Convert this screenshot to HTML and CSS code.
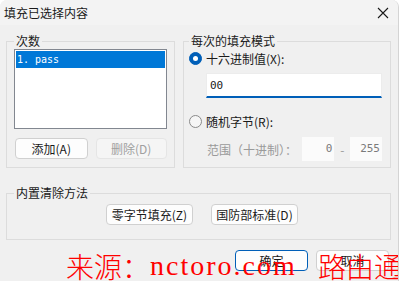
FILE: index.html
```html
<!DOCTYPE html>
<html lang="zh-CN">
<head>
    <meta charset="UTF-8">
    <title>填充已选择内容</title>
    <link rel="stylesheet" href="styles.css">
</head>
<body>
    <div class="dialog">
        <div class="titlebar">
            <span class="title">填充已选择内容</span>
            <svg class="close" width="12" height="12" viewBox="0 0 12 12">
                <path d="M1 1 L11 11 M11 1 L1 11" stroke="#1a1a1a" stroke-width="1.1" fill="none"/>
            </svg>
        </div>

        <div class="content">
            <div class="top-row">
                <fieldset class="group group-passes">
                    <legend>次数</legend>
                    <div class="listbox">
                        <div class="list-item selected">1. pass</div>
                    </div>
                    <div class="btn-row">
                        <button class="btn">添加(A)</button>
                        <button class="btn" disabled>删除(D)</button>
                    </div>
                </fieldset>

                <fieldset class="group group-mode">
                    <legend>每次的填充模式</legend>
                    <div class="radio-row">
                        <span class="radio checked"></span>
                        <span>十六进制值(X):</span>
                    </div>
                    <div class="hex-input">00</div>
                    <div class="radio-row second">
                        <span class="radio"></span>
                        <span>随机字节(R):</span>
                    </div>
                    <div class="range-row">
                        <span class="range-label">范围（十进制）：</span>
                        <span class="num-box">0</span>
                        <span class="dash">-</span>
                        <span class="num-box">255</span>
                    </div>
                </fieldset>
            </div>

            <fieldset class="group group-method">
                <legend>内置清除方法</legend>
                <div class="method-row">
                    <button class="btn btn-wide">零字节填充(Z)</button>
                    <button class="btn btn-wide">国防部标准(D)</button>
                </div>
            </fieldset>

            <div class="footer">
                <button class="btn default">确定</button>
                <button class="btn">取消</button>
            </div>
        </div>

        <div class="watermark">
            <span class="wm-cjk">来源：</span><span class="wm-latin">nctoro.com</span><span class="wm-cjk">路由通</span>
        </div>
    </div>
</body>
</html>
```

FILE: styles.css
```css
* {
    box-sizing: border-box;
}
body {
    margin: 0;
    background-color: #ffffff;
    font-family: "Noto Sans CJK SC", "Liberation Sans", sans-serif;
    font-size: 12px;
    color: #1a1a1a;
}
.dialog {
    position: relative;
    width: 399px;
    height: 281px;
    background-color: #f0f0f0;
    border-right: 1px solid #d4d4d4;
    border-top-left-radius: 7px;
    border-top-right-radius: 7px;
    overflow: hidden;
}
.titlebar {
    height: 25px;
    display: flex;
    align-items: center;
    justify-content: space-between;
    padding: 0 9px 0 4px;
    background-color: #f3f3f3;
}
.title {
    line-height: 16px;
}
.close {
    display: block;
}
.content {
    padding: 8px 7px 0 6px;
}
.top-row {
    display: flex;
    gap: 8px;
}
.group {
    margin: 0;
    border: 1px solid #dcdcdc;
    min-inline-size: 0;
}
.group legend {
    padding: 0 2px;
    line-height: 16px;
}
.group-passes {
    width: 169px;
    padding: 0 7px 8px 7px;
}
.group-mode {
    width: 208px;
    padding: 0 8px 6px 5px;
}
.listbox {
    height: 80px;
    border: 1px solid #828790;
    background-color: #ffffff;
    padding: 1px;
}
.list-item {
    height: 17px;
    line-height: 17px;
    padding-left: 1px;
    font-family: "DejaVu Sans Mono", monospace;
    font-size: 10px;
}
.list-item.selected {
    background-color: #0078d7;
    color: #ffffff;
}
.btn-row {
    display: flex;
    gap: 8px;
    margin: 9px 0 0 1px;
}
.btn {
    height: 21px;
    width: 73px;
    padding: 0;
    border: 1px solid #d0d0d0;
    border-radius: 4px;
    background-color: #fdfdfd;
    font-family: inherit;
    font-size: 12px;
    color: #1a1a1a;
}
.btn:disabled {
    width: 72px;
    background-color: #f5f5f5;
    border-color: #e5e5e5;
    color: #a0a0a0;
}
.btn.default {
    border-color: #005fb8;
}
.btn-wide {
    width: 87px;
}
.radio-row {
    display: flex;
    align-items: center;
    gap: 4px;
    height: 18px;
}
.radio-row.second {
    margin-top: 14px;
}
.radio {
    position: relative;
    width: 13px;
    height: 13px;
    border-radius: 50%;
    border: 1px solid #8a8a8a;
    background-color: #f6f6f6;
}
.radio.checked {
    border-color: #005fb8;
    background-color: #005fb8;
}
.radio.checked::after {
    content: "";
    position: absolute;
    left: 3px;
    top: 3px;
    width: 5px;
    height: 5px;
    border-radius: 50%;
    background-color: #ffffff;
}
.hex-input {
    margin: 6px 0 0 17px;
    height: 25px;
    line-height: 23px;
    padding-left: 3px;
    background-color: #ffffff;
    border: 1px solid #ececec;
    border-bottom: 2px solid #005fb8;
    font-family: "DejaVu Sans Mono", monospace;
    font-size: 11px;
}
.range-row {
    display: flex;
    align-items: center;
    margin: 7px 0 0 18px;
    color: #9a9a9a;
}
.range-label {
    width: 96px;
}
.num-box {
    width: 32px;
    height: 24px;
    line-height: 24px;
    padding-right: 2px;
    text-align: right;
    background-color: #fbfbfb;
    color: #7a7a7a;
    font-family: "DejaVu Sans Mono", monospace;
    font-size: 11px;
}
.dash {
    width: 16px;
    text-align: center;
}
.group-method {
    margin-top: 17px;
    padding: 0 0 14px 7px;
}
.method-row {
    display: flex;
    justify-content: center;
    gap: 18px;
    margin-top: 3px;
}
.footer {
    display: flex;
    justify-content: flex-end;
    gap: 8px;
    margin: 10px 2px 0 0;
}
.watermark {
    position: absolute;
    left: 66px;
    top: 251px;
    display: flex;
    color: #ff0000;
    font-size: 28px;
    line-height: 30px;
    white-space: nowrap;
}
.wm-cjk {
    font-family: "Noto Sans CJK SC", serif;
    font-weight: 300;
}
.wm-latin {
    width: 168px;
    font-family: "Liberation Serif", serif;
    letter-spacing: 2px;
}
```
